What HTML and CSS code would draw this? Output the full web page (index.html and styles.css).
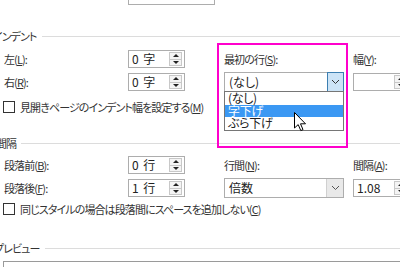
FILE: index.html
```html
<!DOCTYPE html>
<html>
<head>
  <meta charset="utf-8">
  <title>段落</title>
  <link rel="stylesheet" href="styles.css">
</head>
<body>
  <div class="dialog">

    <div class="top-row">
      <div class="field stub"></div>
    </div>

    <div class="group-title indent-title"><span>インデント</span></div>

    <div class="grid indent">
      <div class="lbl">左(<u>L</u>):</div>
      <div class="field"><span class="val">0 字</span><span class="spinner"><i class="up"></i><i class="down"></i></span></div>
      <div class="lbl">最初の行(<u>S</u>):</div>
      <div class="lbl">幅(<u>Y</u>):</div>

      <div class="lbl">右(<u>R</u>):</div>
      <div class="field"><span class="val">0 字</span><span class="spinner"><i class="up"></i><i class="down"></i></span></div>
      <div class="combo open">
        <span class="val">(なし)</span>
        <span class="drop hot"><svg width="9" height="6" viewBox="0 0 9 6"><path d="M1 1 L4.5 4.5 L8 1" fill="none" stroke="#333" stroke-width="1"/></svg></span>
        <ul class="list">
          <li>(なし)</li>
          <li class="sel">字下げ</li>
          <li>ぶら下げ</li>
        </ul>
      </div>
      <div class="field"><span class="val"></span><span class="spinner"><i class="up"></i><i class="down"></i></span></div>
    </div>

    <div class="check-row first-check">
      <span class="box"></span>
      <span>見開きページのインデント幅を設定する(<u>M</u>)</span>
    </div>

    <div class="group-title space-title"><span>間隔</span></div>

    <div class="grid spacing">
      <div class="lbl">段落前(<u>B</u>):</div>
      <div class="field"><span class="val">0 行</span><span class="spinner"><i class="up"></i><i class="down"></i></span></div>
      <div class="lbl">行間(<u>N</u>):</div>
      <div class="lbl">間隔(<u>A</u>):</div>

      <div class="lbl">段落後(<u>F</u>):</div>
      <div class="field"><span class="val">1 行</span><span class="spinner"><i class="up"></i><i class="down"></i></span></div>
      <div class="combo">
        <span class="val">倍数</span>
        <span class="drop"><svg width="9" height="6" viewBox="0 0 9 6"><path d="M1 1 L4.5 4.5 L8 1" fill="none" stroke="#555" stroke-width="1"/></svg></span>
      </div>
      <div class="field"><span class="val">1.08</span><span class="spinner"><i class="up"></i><i class="down"></i></span></div>
    </div>

    <div class="check-row second-check">
      <span class="box"></span>
      <span>同じスタイルの場合は段落間にスペースを追加しない(<u>C</u>)</span>
    </div>

    <div class="group-title preview-title"><span>プレビュー</span></div>
    <div class="preview"></div>

    <!-- annotation + pointer drawn over the dialog -->
    <div class="highlight"></div>
    <svg class="cursor" width="13" height="20" viewBox="0 0 13 20">
      <path d="M0.5 0.5 L0.5 16 L4.2 12.6 L6.8 18.6 L9 17.6 L6.5 11.8 L11.5 11.8 Z" fill="#fff" stroke="#000" stroke-width="1" stroke-linejoin="miter"/>
    </svg>
  </div>
</body>
</html>
```

FILE: styles.css
```css
html, body {
  margin: 0;
  padding: 0;
  background: #fff;
}

.dialog {
  position: relative;
  display: flow-root;
  width: 400px;
  height: 267px;
  overflow: hidden;
  font-family: "Noto Sans CJK JP", "Noto Sans", sans-serif;
  font-feature-settings: "palt";
  font-size: 11px;
  letter-spacing: -0.9px;
  line-height: 16px;
  color: #333;
}

u {
  text-decoration: underline;
  text-underline-offset: 1px;
}

.top-row {
  height: 5px;
  padding-left: 128px;
  overflow: hidden;
}

.field.stub {
  width: 87px;
  height: 5px;
  border-top: none;
}

.group-title {
  display: flex;
  align-items: center;
  height: 16px;
  white-space: nowrap;
}

.group-title::after {
  content: "";
  flex: 1;
  border-top: 1px solid #dcdcdc;
  margin-left: 5px;
}

.indent-title {
  margin-top: 23px;
  margin-left: -7px;
}

.space-title {
  margin-top: 19px;
  margin-left: -4px;
}

.preview-title {
  margin-top: 22px;
  margin-left: -6px;
}

.grid {
  display: grid;
  grid-template-columns: 124px 96px 129px 1fr;
  grid-template-rows: 18px 18px;
  row-gap: 5px;
  padding-left: 4px;
  align-items: center;
}

.indent {
  margin-top: 6px;
}

.spacing {
  margin-top: 5px;
}

.lbl {
  white-space: nowrap;
}

.field {
  box-sizing: border-box;
  width: 57px;
  height: 18px;
  border: 1px solid #adadad;
  background: #fff;
  display: flex;
  align-items: center;
  padding: 0 2px 0 3px;
}

.field .val {
  flex: 1;
  white-space: nowrap;
  color: #222;
  font-size: 12px;
  letter-spacing: 0;
  word-spacing: 2px;
}

.spinner {
  box-sizing: border-box;
  width: 13px;
  height: 14px;
  border: 1px solid #c8c8c8;
  background: #f4f4f4;
  display: flex;
  flex-direction: column;
}

.spinner i {
  flex: 1;
  display: flex;
  align-items: center;
  justify-content: center;
}

.spinner i.up {
  border-bottom: 1px solid #c8c8c8;
}

.spinner i::before {
  content: "";
  border-left: 3px solid transparent;
  border-right: 3px solid transparent;
}

.spinner i.up::before {
  border-bottom: 3px solid #222;
}

.spinner i.down::before {
  border-top: 3px solid #222;
}

.combo {
  position: relative;
  box-sizing: border-box;
  width: 120px;
  height: 20px;
  border: 1px solid #adadad;
  background: #fff;
  display: flex;
  align-items: center;
  padding-left: 4px;
}

.combo .val {
  flex: 1;
  color: #222;
  font-size: 12px;
  letter-spacing: 0;
}

.drop {
  box-sizing: border-box;
  width: 17px;
  height: 18px;
  display: flex;
  align-items: center;
  justify-content: center;
  background: #e9e9e9;
  border-left: 1px solid #d0d0d0;
}

.drop.hot {
  height: 20px;
  width: 17px;
  margin-right: -1px;
  background: #cce4f7;
  border: 1px solid #3c7fb1;
}

.list {
  position: absolute;
  left: -1px;
  top: 18px;
  box-sizing: border-box;
  width: 120px;
  margin: 0;
  padding: 0;
  list-style: none;
  background: #fff;
  border: 1px solid #767676;
  z-index: 2;
}

.list li {
  height: 12.5px;
  line-height: 12px;
  padding-left: 3px;
  color: #222;
  font-size: 12px;
  letter-spacing: -0.3px;
}

.list li.sel {
  background: #3b98f3;
  color: #fff;
}

.check-row {
  display: flex;
  align-items: center;
  height: 18px;
  padding-left: 3px;
  white-space: nowrap;
}

.first-check {
  margin-top: 7px;
}

.second-check {
  margin-top: 3px;
}

.check-row .box {
  box-sizing: border-box;
  width: 12px;
  height: 12px;
  border: 1px solid #333;
  background: #fff;
  margin-right: 5px;
}

.preview {
  margin: 5px 0 0 3px;
  height: 20px;
  border: 1px solid #9a9a9a;
  border-right: none;
}

.highlight {
  position: absolute;
  left: 217px;
  top: 43px;
  width: 127px;
  height: 101px;
  border: 2px solid #f0c;
  z-index: 3;
  pointer-events: none;
}

.cursor {
  position: absolute;
  left: 294px;
  top: 112px;
  z-index: 4;
}
```
